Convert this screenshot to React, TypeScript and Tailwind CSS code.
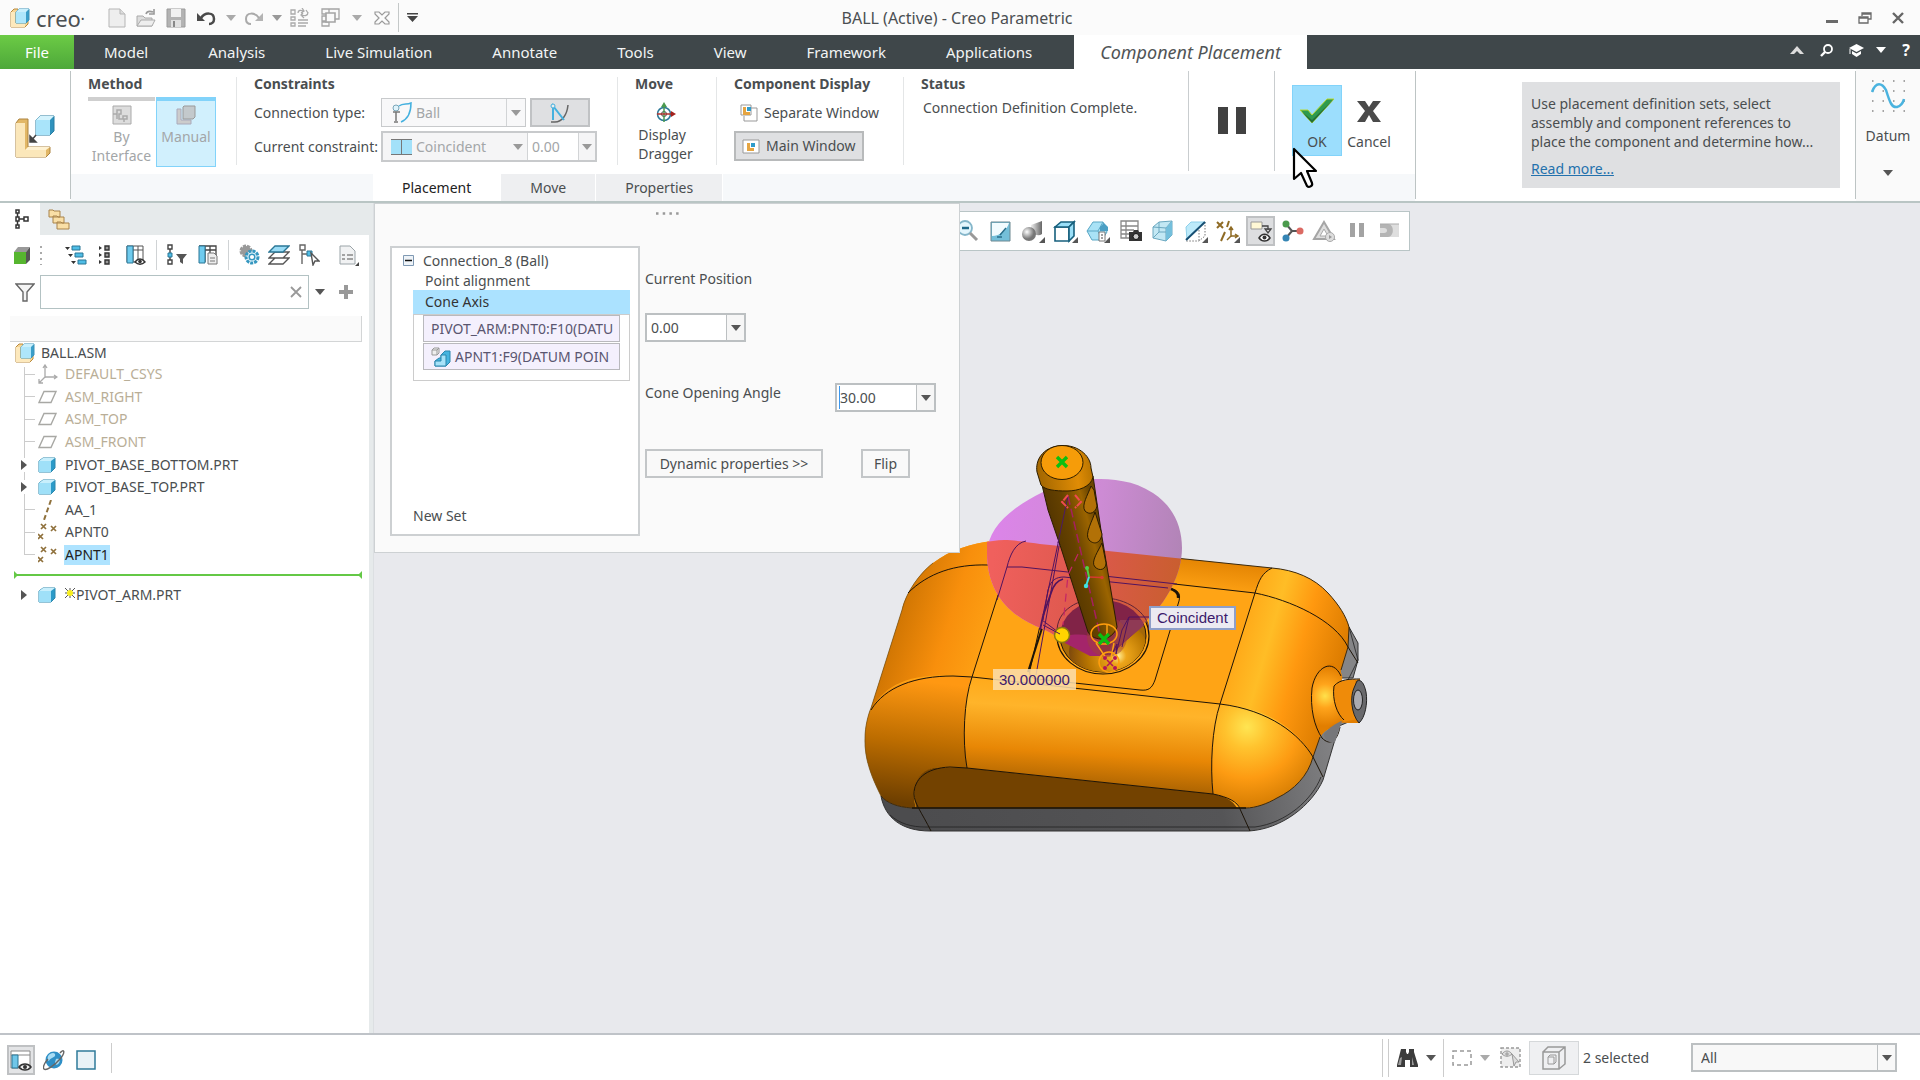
import { useState } from "react";
import type { ReactNode } from "react";

const Caret = ({ color = "#555" }: { color?: string }) => (
    <svg width="10" height="6" viewBox="0 0 10 6" className="shrink-0"><path d="M0 0H10L5 6Z" fill={color} /></svg>
);

const Corner = () => <path d="M25 19V25H19Z" fill="#555" />;

/* ---------- shared drawings ---------- */

const AssemblyIcon = () => (
    <svg width="20" height="20" viewBox="0 0 20 20" className="shrink-0">
        <path d="M1 4L4 1H8V13L16 12H18V16L15 19H1Z" fill="#f6d596" stroke="#b98a3c" />
        <path d="M1 4H5V15H15V19H1Z" fill="#fde9bd" />
        <path d="M6 4L9 1H19V12L16 15H6Z" fill="#3a9ec9" stroke="#3d93b8" />
        <path d="M6 4H16V15H6Z" fill="#aee6fb" />
        <path d="M6 4L9 1H19L16 4Z" fill="#c9effc" />
    </svg>
);

const PartIcon = () => (
    <svg width="18" height="16" viewBox="0 0 18 16" className="shrink-0">
        <path d="M1 4L5 1H17V11L13 15H1Z" fill="#2b9ac8" stroke="#2d88ad" />
        <path d="M1 4H13V15H1Z" fill="#9fe0f8" />
        <path d="M1 4L5 1H17L13 4Z" fill="#c8effc" />
    </svg>
);

const CsysIcon = () => (
    <svg width="20" height="20" viewBox="0 0 20 20" fill="none" stroke="#aaa" className="shrink-0">
        <path d="M7 13V2M5 4L7 1L9 4M7 13H18M16 11L19 13L16 15M7 13L1 19M1 15V19H5" strokeWidth="1.3" />
    </svg>
);

const PlaneIcon = () => (
    <svg width="20" height="14" viewBox="0 0 20 14" className="shrink-0">
        <path d="M6 1.500H18L13 12.500H1Z" fill="none" stroke="#a8a8a4" strokeWidth="1.400" />
    </svg>
);

const AxisIcon = () => (
    <svg width="20" height="20" viewBox="0 0 20 20" className="shrink-0">
        <path d="M13 0L6 20" stroke="#8f713c" strokeWidth="2" strokeDasharray="5 3" />
    </svg>
);

const PointsIcon = () => (
    <svg width="20" height="18" viewBox="0 0 20 18" stroke="#8f713c" strokeWidth="1.700" className="shrink-0">
        <path d="M3 1L8 6M8 1L3 6M13 3L18 8M18 3L13 8M0 11L5 16M5 11L0 16" />
    </svg>
);

const CreoMark = () => (
    <div className="flex items-center gap-1.5 text-[#4b4f52]">
        <AssemblyIcon />
        <span className="text-[22px] leading-6">creo<sup className="text-[9px]">•</sup></span>
    </div>
);

/* ---------- title bar ---------- */

const TitleBar = () => (
    <header className="flex h-[35px] items-center bg-[#fbfbfb] px-2.5">
        <div className="flex flex-1 items-center">
            <CreoMark />
            <div className="ml-6 flex items-center text-[#a6a6a6]">
                <button aria-label="New" className="mr-2.5">
                    <svg width="18" height="20" viewBox="0 0 18 20" fill="#eee" stroke="#b5b5b5"><path d="M1 1H12L17 6V19H1Z" /><path d="M12 1V6H17" fill="#ddd" /></svg>
                </button>
                <button aria-label="Open" className="mr-2.5">
                    <svg width="20" height="20" viewBox="0 0 20 20" fill="#ddd" stroke="#aaa"><path d="M1 18V8H7L9 10H16V18Z" /><path d="M1 18L5 12H19L16 18Z" fill="#eee" /><path d="M10 6C11 3 14 3 17 4M18 1V6H13" fill="none" strokeWidth="1.6" stroke="#999" /></svg>
                </button>
                <button aria-label="Save" className="mr-2.5">
                    <svg width="20" height="20" viewBox="0 0 20 20"><path d="M1 1H19V19H1Z" fill="#b3b3b3" stroke="#9b9b9b" /><path d="M5 1H15V9H5Z" fill="#f1f1f1" /><path d="M5 12H15V19H5Z" fill="#e0e0e0" /><path d="M7 13H9V19H7Z" fill="#888" /></svg>
                </button>
                <button aria-label="Undo" className="mr-2.5">
                    <svg width="20" height="16" viewBox="0 0 20 16"><path d="M1 3V11H9Z" fill="#4a4a4a" /><path d="M5 8C9 2 18 2 18 9C18 12 16 14 13 14" fill="none" stroke="#4a4a4a" strokeWidth="2.5" /></svg>
                </button>
                <Caret color="#aaa" />
                <button aria-label="Redo" className="mr-2 ml-2">
                    <svg width="20" height="16" viewBox="0 0 20 16"><path d="M19 3V11H11Z" fill="#b4b4b4" /><path d="M15 8C11 2 2 2 2 9C2 12 4 14 7 14" fill="none" stroke="#aaa" strokeWidth="2" /></svg>
                </button>
                <Caret color="#999" />
                <button aria-label="Regenerate" className="mr-3 ml-2">
                    <svg width="19" height="20" viewBox="0 0 19 20" fill="none" stroke="#aaa" strokeWidth="1.3"><path d="M1 2H5V6H1ZM1 9H5V12H1ZM1 15H5V18H1ZM8 12H18M8 15H18M8 18H16" /><path d="M8 5C8 2 11 2 13 3M12 0L14 3L11 5M18 4C18 8 15 8 12 7M13 5L11 7L14 10M18 5L16 2" /></svg>
                </button>
                <button aria-label="Windows" className="mr-3">
                    <svg width="19" height="20" viewBox="0 0 19 20" fill="#fafafa" stroke="#a5a5a5" strokeWidth="1.3"><path d="M1 1H8V6H1ZM1 8H8V13H1ZM1 14H8V18H1ZM8 1H18V11H8Z" /><path d="M5 5H14V14H5Z" strokeWidth="1.600" /></svg>
                </button>
                <Caret color="#aaa" />
                <button aria-label="Close window" className="mr-2 ml-3">
                    <svg width="16" height="14" viewBox="0 0 16 14" fill="none" stroke="#9a9a9a" strokeWidth="1.2"><path d="M1 1H5L8 4L11 1H15V3L11 7L15 11V13H11L8 10L5 13H1V11L5 7L1 3Z" /></svg>
                </button>
                <span className="h-[29px] w-px bg-[#c4c8c8]" />
                <button aria-label="Customize" className="ml-2">
                    <svg width="11" height="9" viewBox="0 0 11 9" fill="#444"><path d="M0 0H11V1.500H0ZM0 3H11L5.500 9Z" /></svg>
                </button>
            </div>
        </div>
        <h1 className="text-base text-[#4b4f52]">BALL (Active) - Creo Parametric</h1>
        <div className="flex flex-1 items-center justify-end gap-5 pr-1.5">
            <button aria-label="Minimize" className="pt-2">
                <svg width="12" height="4" viewBox="0 0 12 4"><path d="M0 0H12V3H0Z" fill="#6a6a6a" /></svg>
            </button>
            <button aria-label="Restore">
                <svg width="14" height="12" viewBox="0 0 14 12" fill="none" stroke="#6a6a6a" strokeWidth="1.300"><path d="M4 4V1H13V7H10M4 2H13" /><path d="M1 5H10V11H1ZM1 6H10" /></svg>
            </button>
            <button aria-label="Close">
                <svg width="12" height="12" viewBox="0 0 12 12"><path d="M1 1L11 11M11 1L1 11" stroke="#666" strokeWidth="2.400" /></svg>
            </button>
        </div>
    </header>
);

/* ---------- menu ---------- */

const menus = ["Model", "Analysis", "Live Simulation", "Annotate", "Tools", "View", "Framework", "Applications"];

const MenuBar = () => (
    <nav className="flex h-[34px] items-stretch bg-[#3f474a] text-[15px] text-white">
        <button className="w-[74px] bg-linear-to-b from-[#6ccb45] to-[#4da83a]">File</button>
        {menus.map((m) => (
            <button key={m} className="px-[30px] text-[#f2f4f4]">{m}</button>
        ))}
        <button className="ml-3 bg-white px-[26px] text-lg text-[#505456] italic">Component Placement</button>
        <div className="flex flex-1 items-center justify-end gap-4 pr-2.5 pb-1">
            <button aria-label="Collapse ribbon"><svg width="14" height="9" viewBox="0 0 14 9"><path d="M7 0L14 8H10L7 5L4 8H0Z" fill="#ddd" /></svg></button>
            <button aria-label="Search"><svg width="13" height="13" viewBox="0 0 13 13" fill="none" stroke="#fff"><circle cx="8" cy="5" r="4" strokeWidth="1.800" /><path d="M5 8L1 12" strokeWidth="2.400" /></svg></button>
            <button aria-label="Learning" className="flex items-center gap-3">
                <svg width="15" height="13" viewBox="0 0 15 13" fill="#fff"><path d="M7.500 0L15 4L7.500 8L0 4ZM3 7L7.500 9.500L12 7V10L7.500 13L3 10Z" /><path d="M1 5V10" stroke="#fff" /></svg>
                <Caret color="#fff" />
            </button>
            <button aria-label="Help" className="text-base font-bold">?</button>
        </div>
    </nav>
);

/* ---------- ribbon ---------- */

const Rule = ({ tall = false }: { tall?: boolean }) => (
    <span className={tall ? "mt-0.5 h-[100px] w-px shrink-0 bg-[#c9cdcf]" : "mt-2 h-[88px] w-px shrink-0 bg-[#e4e6e7]"} />
);

const Group = ({ title, children }: { title: string; children: ReactNode }) => (
    <section className="pt-[5px] pr-5 pl-[17px]">
        <h2 className="leading-5 font-bold text-[#4a4e50]">{title}</h2>
        {children}
    </section>
);

const MiniWindow = ({ separate = false }: { separate?: boolean }) => (
    <svg width="18" height="18" viewBox="0 0 18 18" fill="#fff" stroke="#999" className="shrink-0">
        {separate ? <path d="M7 4H17V17H4V12M1 1H11V11H1Z" /> : <path d="M1 3H17V16H1Z" />}
        <g transform={separate ? "translate(2 2)" : "translate(4 5)"} stroke="none">
            <path d="M1 1H4V6H8V9H1Z" fill="#e5a542" />
            <path d="M5 1H9V5H5Z" fill="#2f9ccb" />
        </g>
    </svg>
);

const Ribbon = () => {
    const [tab, setTab] = useState("Placement");

    return (
        <div className="flex h-[134px] border-b-2 border-[#b9c5c4] bg-white text-sm text-[#4a4e50]">
            <div className="flex w-[70px] shrink-0 items-center justify-center pt-1">
                <svg width="40" height="44" viewBox="0 0 40 44">
                    <path d="M1 8L4 4H13V32H35V38L31 42H1Z" fill="#e2b766" stroke="#ad8440" />
                    <path d="M1 8H10V35H31V42H1Z" fill="#fbe7ba" />
                    <path d="M10 35L13 32H35L31 35Z" fill="#fff2d2" />
                    <path d="M21 5L25 1H39V16L35 20H21Z" fill="#2f92bd" stroke="#2a7da1" />
                    <path d="M21 5H35V20H21Z" fill="#a9e4fa" />
                    <path d="M21 5L25 1H39L35 5Z" fill="#d4f3fd" />
                    <path d="M21 20L16 26M15 21V27H21Z" fill="#444" stroke="#444" strokeWidth="1.500" />
                </svg>
            </div>
            <div className="my-0.5 w-px bg-[#bdc4c4]" />

            <div className="flex shrink-0 flex-col">
                <div className="flex h-[105px]">
                    <Group title="Method">
                        <div className="mt-[3px] flex gap-px leading-[19px] text-[#a3a6a8]">
                            <button className="flex w-[67px] flex-col items-center border-t-4 border-[#cfcfcf] pt-1">
                                <svg width="20" height="20" viewBox="0 0 20 20" fill="none" stroke="#aaa"><path d="M1 1H19V19H1Z" fill="#ddd" /><path d="M1 9H5V5H9V9H7V14H11V11H15V14H12V17M5 9V14" strokeWidth="1.500" /></svg>
                                <span className="mt-0.5">By<br />Interface</span>
                            </button>
                            <button className="flex h-[70px] w-[60px] flex-col items-center border border-t-4 border-[#82d3fa] bg-[#d1f0fd] pt-1">
                                <svg width="20" height="20" viewBox="0 0 20 20" fill="#ccc" stroke="#aab"><path d="M1 4H5V15H15V19H1Z" /><path d="M7 2L8 1H19V12L17 14H7Z" fill="#c3c9cc" stroke="#999" /></svg>
                                <span className="mt-0.5">Manual</span>
                            </button>
                        </div>
                    </Group>
                    <Rule />
                    <Group title="Constraints">
                        <div className="mt-1 flex items-center">
                            <label htmlFor="ctype" className="w-[127px] whitespace-nowrap">Connection type:</label>
                            <div className="flex h-[29px] w-[145px] items-center border border-[#c8cacc] bg-[#f8f8f9] pl-2.5 text-[#a3a6a8]">
                                <svg width="20" height="22" viewBox="0 0 20 22" fill="none" className="shrink-0"><circle cx="4" cy="6" r="3" stroke="#7aa6b8" fill="#dff3fb" /><path d="M1 10H8M4 10V19M2 20H6" stroke="#777" strokeWidth="1.500" /><path d="M7 4C11 1 15 3 19 1C19 10 16 17 9 20" stroke="#45b1df" strokeWidth="1.500" /></svg>
                                <select id="ctype" className="h-full min-w-0 flex-1 appearance-none pl-1 text-[#a3a6a8]"><option>Ball</option></select>
                                <span className="flex h-full w-[19px] items-center justify-center border-l border-[#d2d4d6]"><Caret color="#999" /></span>
                            </div>
                            <button aria-label="Limits" className="ml-1 flex h-[29px] w-[60px] items-center justify-center border-2 border-[#c0c2c4] bg-[#dfe0e2]">
                                <svg width="20" height="22" viewBox="0 0 20 22" fill="none"><path d="M1 20H5C12 20 17 13 18 3" stroke="#666" strokeWidth="1.500" /><path d="M3 18V4L14 18" stroke="#45b1df" strokeWidth="2" /><circle cx="3" cy="4" r="2" stroke="#45b1df" fill="#eee" /></svg>
                            </button>
                        </div>
                        <div className="mt-1 flex items-center">
                            <label htmlFor="ccons" className="w-[127px] whitespace-nowrap">Current constraint:</label>
                            <div className="flex h-[31px] w-[216px] items-center border-2 border-[#c8cacc] bg-[#f5f5f6] pl-2 text-[#a3a6a8]">
                                <svg width="21" height="16" viewBox="0 0 21 16" className="shrink-0"><path d="M0 0H21V16H0Z" fill="#a3e1f9" /><path d="M0 0.500H21M0 15.500H21M10.500 0V16" stroke="#777" /></svg>
                                <select id="ccons" className="h-full min-w-0 flex-1 appearance-none pl-1 text-[#a3a6a8]"><option>Coincident</option></select>
                                <Caret color="#999" />
                                <input aria-label="Offset" defaultValue="0.00" className="ml-1 h-full w-[52px] border-x border-[#d2d4d6] bg-white px-1 text-[#a3a6a8]" />
                                <span className="flex w-4 items-center justify-center"><Caret color="#999" /></span>
                            </div>
                        </div>
                    </Group>
                    <Rule />
                    <Group title="Move">
                        <button className="mt-2 flex w-[61px] flex-col items-center text-left leading-[19px]">
                            <svg width="20" height="21" viewBox="0 0 20 21" fill="none"><circle cx="8" cy="12" r="6.500" stroke="#2a7796" strokeWidth="1.500" /><circle cx="8" cy="12" r="2.500" stroke="#444" /><path d="M8 5V20" stroke="#4b9a4f" strokeWidth="1.500" /><path d="M1 12H15" stroke="#b1322c" strokeWidth="1.500" /><path d="M8 0L11 5H5Z" fill="#4b9a4f" /><path d="M20 12L15 9V15Z" fill="#a3211c" /></svg>
                            <span className="mt-0.5">Display<br />Dragger</span>
                        </button>
                    </Group>
                    <Rule />
                    <Group title="Component Display">
                        <div className="mt-1 flex w-[149px] flex-col items-start gap-1">
                            <button className="flex h-[29px] items-center gap-1.5 pl-1.5 whitespace-nowrap"><MiniWindow separate />Separate Window</button>
                            <button className="flex h-[30px] items-center gap-1.5 border-2 border-[#b8babb] bg-[#dfe0e2] px-1.5 whitespace-nowrap"><MiniWindow />Main Window</button>
                        </div>
                    </Group>
                    <Rule />
                    <Group title="Status">
                        <p className="mt-1 w-[247px] pl-0.5 leading-5">Connection Definition Complete.</p>
                    </Group>
                    <Rule tall />
                    <div className="flex w-[85px] items-start justify-center pt-[38px]">
                        <button aria-label="Pause"><svg width="28" height="27" viewBox="0 0 28 27" fill="#414141"><path d="M0 0H10V27H0ZM18 0H28V27H18Z" /></svg></button>
                    </div>
                    <Rule tall />
                    <div className="flex w-[140px] items-start pt-4 pl-[17px]">
                        <button className="flex h-[71px] w-[50px] flex-col items-center border border-[#82d3fa] bg-[#9cdefd] pt-3">
                            <svg width="36" height="26" viewBox="0 0 36 26"><path d="M1 12H9L13 17L28 1H35L13 25Z" fill="#2e9a4f" stroke="#b8d832" /><path d="M35 1L13 25L3 14L13 22Z" fill="#226f39" /></svg>
                            <span className="mt-2 leading-5">OK</span>
                        </button>
                        <button className="flex w-[54px] flex-col items-center pt-4">
                            <svg width="24" height="21" viewBox="0 0 24 21" fill="#4a4a4a"><path d="M0 0H8L12 6L16 0H24L16 10L24 21H16L12 14L8 21H0L8 10Z" /></svg>
                            <span className="mt-2.5 leading-5">Cancel</span>
                        </button>
                    </div>
                </div>
                <div className="flex h-[27px] bg-[#f6f8fa] pl-[302px]">
                    {["Placement", "Move", "Properties"].map((t) => (
                        <button
                            key={t}
                            onClick={() => setTab(t)}
                            className={`border-r border-white px-[29px] ${tab === t ? "bg-white text-[#222]" : "bg-[#eeeff1]"}`}
                        >
                            {t}
                        </button>
                    ))}
                </div>
            </div>
            <div className="my-0.5 w-px bg-[#bdc4c4]" />

            <div className="flex flex-1 justify-end pr-[15px]">
                <aside className="mt-[13px] h-[106px] w-[318px] bg-[#dfe0e2] pt-3 pl-[9px] leading-[19px] whitespace-nowrap">
                    <p>Use placement definition sets, select<br />assembly and component references to<br />place the component and determine how...</p>
                    <a href="#more" className="mt-2 inline-block text-[#2371ad] underline">Read more...</a>
                </aside>
            </div>

            <div className="my-0.5 w-px bg-[#bdc4c4]" />
            <button className="flex w-16 shrink-0 flex-col items-center bg-[#fafafa] pt-2">
                <svg width="36" height="36" viewBox="0 0 36 36" fill="none">
                    <path d="M2 4H36M2 14H36M2 24H36M2 34H36" stroke="#888" strokeWidth="1.500" strokeDasharray="1.500 9" />
                    <path d="M2 15C6 4 12 6 16 13C20 26 22 31 27 30C31 29 33 26 34 22" stroke="#4ab3df" strokeWidth="2.500" />
                </svg>
                <span className="mt-[13px] mb-6 leading-5">Datum</span>
                <Caret />
            </button>
        </div>
    );
};

/* ---------- model tree ---------- */

type Node = { name: string; icon: ReactNode; dim?: boolean; open?: boolean; selected?: boolean };

const nodes: Node[] = [
    { name: "DEFAULT_CSYS", icon: <CsysIcon />, dim: true },
    { name: "ASM_RIGHT", icon: <PlaneIcon />, dim: true },
    { name: "ASM_TOP", icon: <PlaneIcon />, dim: true },
    { name: "ASM_FRONT", icon: <PlaneIcon />, dim: true },
    { name: "PIVOT_BASE_BOTTOM.PRT", icon: <PartIcon />, open: true },
    { name: "PIVOT_BASE_TOP.PRT", icon: <PartIcon />, open: true },
    { name: "AA_1", icon: <AxisIcon /> },
    { name: "APNT0", icon: <PointsIcon /> },
    { name: "APNT1", icon: <PointsIcon />, selected: true },
];

const Twisty = () => <svg width="6" height="10" viewBox="0 0 6 10"><path d="M0 0L6 5L0 10Z" fill="#555" /></svg>;

const Tool = ({ label, children }: { label: string; children: ReactNode }) => (
    <button aria-label={label} className="flex w-[26px] shrink-0 justify-center">
        <svg width="22" height="22" viewBox="0 0 22 22" fill="none">{children}</svg>
    </button>
);

const ToolRule = () => <span className="mx-[7px] h-[30px] w-px bg-[#d0d3d5]" />;

const ModelTree = () => (
    <aside className="flex w-[374px] shrink-0 border-r border-[#dcdfe2] bg-[#e6eaeb]">
        <div className="flex flex-1 flex-col">
            <div className="flex h-8">
                <button aria-label="Model tree" className="flex w-10 items-center justify-center bg-white pl-1">
                    <svg width="14" height="20" viewBox="0 0 14 20" fill="none" stroke="#333" strokeWidth="1.500"><path d="M1 1H4V4H1ZM1 8H4V12H1ZM1 16H4V19H1ZM9 8H13V12H9ZM2.500 4V8M2.500 12V16M4 10H9" /></svg>
                </button>
                <button aria-label="Folders" className="ml-2 flex items-center">
                    <svg width="22" height="22" viewBox="0 0 22 22" fill="#f9dfa6" stroke="#a8834a"><path d="M1 2H5L6 3H12V9H1ZM5 8H9L10 9H16V15H5ZM9 14H13L14 15H21V21H9Z" /></svg>
                </button>
            </div>
            <div className="flex-1 bg-white">
                <div className="flex items-center pt-[5px] pl-[9px]">
                    <Tool label="Model display"><path d="M3 8H15V20H3Z" fill="#56b52f" /><path d="M3 8L7 3H19L15 8Z" fill="#999" /><path d="M15 8L19 3V16L15 20Z" fill="#555" /></Tool>
                    <svg width="4" height="20" viewBox="0 0 4 20" className="mr-5 ml-1 shrink-0"><path d="M2 1V20" stroke="#aaa" strokeWidth="2" strokeDasharray="2 4" /></svg>
                    <div className="flex gap-0.5">
                        <Tool label="Expand levels"><g fill="#4fbde6" stroke="#2a7796"><path d="M7 2H15V6H7ZM10 9H18V13H10ZM13 16H21V20H13Z" /></g><path d="M0 3H5L2.500 6ZM3 10H8L5.500 13ZM6 17H11L8.500 20Z" fill="#333" /></Tool>
                        <Tool label="Collapse"><g fill="#999" stroke="#333" strokeWidth="1.400"><path d="M12 2H16V6H12ZM12 9H16V13H12ZM12 16H16V20H12Z" /></g><path d="M6 2L9 4L6 6ZM6 9L9 11L6 13ZM6 16L9 18L6 20Z" fill="#333" /></Tool>
                    </div>
                    <div className="w-1.5" />
                    <Tool label="Columns"><path d="M2 2H18V18H2ZM2 6H18M8 2V18M13 2V18" stroke="#555" /><path d="M2 2H8V19H2Z" fill="#6fcbee" stroke="#2a7796" /><path d="M10 18C13 14 17 14 20 18C17 21 13 21 10 18Z" fill="#fff" stroke="#333" strokeWidth="1.400" /><circle cx="15" cy="17.500" r="1.800" fill="#333" /></Tool>
                    <ToolRule />
                    <div className="flex gap-[5px]">
                        <Tool label="Tree filter"><path d="M2 1H6V5H2ZM2 16H6V20H2ZM4 5V9M4 13V16" stroke="#444" strokeWidth="1.400" /><path d="M2 9H6V13H2Z" fill="#4fbde6" stroke="#2a7796" /><path d="M10 10H21L17 15V20L14 18V15Z" fill="#555" /></Tool>
                        <Tool label="Column settings"><path d="M2 2H19V14M2 6H19M8 2V18M13 2V10" stroke="#444" strokeWidth="1.300" /><path d="M2 2H8V19H2Z" fill="#6fcbee" stroke="#2a7796" /><path d="M11 9H17L20 12V20H11Z" fill="#eee" stroke="#777" /><path d="M13 14H18M13 17H18" stroke="#777" /></Tool>
                    </div>
                    <ToolRule />
                    <div className="flex gap-1">
                        <Tool label="Settings"><circle cx="8" cy="7" r="5" fill="#999" stroke="#999" strokeWidth="3" strokeDasharray="3 1" /><circle cx="14" cy="13" r="6" fill="#eaf8fe" stroke="#3597c0" strokeWidth="3" strokeDasharray="3 1" /><circle cx="14" cy="13" r="2.800" fill="#fff" stroke="#3597c0" strokeWidth="1.500" /></Tool>
                        <Tool label="Layers"><g fill="#fff" stroke="#555" strokeWidth="1.300"><path d="M7 14H21L15 20H1ZM7 8H21L15 14H1Z" /><path d="M7 2H21L15 8H1Z" fill="#9adcf6" stroke="#2a7796" /></g></Tool>
                        <Tool label="Select in tree"><path d="M2 1H7V6H2ZM4 6V20M4 10H10" stroke="#666" strokeWidth="1.400" /><path d="M9 7H14V12H9Z" fill="#4fbde6" stroke="#2a7796" /><path d="M13 9L21 17L17 17L15 21Z" fill="#fff" stroke="#555" strokeWidth="1.400" /></Tool>
                    </div>
                    <div className="w-[13px]" />
                    <Tool label="Report"><path d="M3 2H13L18 7V20H3Z" fill="#f1f2f3" stroke="#9ba4a8" /><path d="M5 11H8M5 15H8M10 11H16M10 15H16" stroke="#888" strokeWidth="1.500" /><path d="M22 18V22H18Z" fill="#444" /></Tool>
                </div>

                <div className="mt-[5px] flex items-center pl-[15px]">
                    <svg width="20" height="19" viewBox="0 0 20 19" className="mr-[5px] shrink-0"><path d="M1 1H19L12 9V18H8V9Z" fill="#f4f4f4" stroke="#666" strokeWidth="1.400" /></svg>
                    <div className="flex h-[34px] w-[269px] items-center border border-[#b3c2c3] pr-1.5">
                        <input aria-label="Filter tree" className="h-full min-w-0 flex-1 px-2 text-sm outline-none" />
                        <button aria-label="Clear"><svg width="12" height="12" viewBox="0 0 12 12"><path d="M1 1L11 11M11 1L1 11" stroke="#999" strokeWidth="1.800" /></svg></button>
                    </div>
                    <button aria-label="Filter options" className="mx-1.5"><Caret /></button>
                    <button aria-label="Add filter" className="ml-2"><svg width="14" height="14" viewBox="0 0 14 14"><path d="M7 0V14M0 7H14" stroke="#999" strokeWidth="4" /></svg></button>
                </div>

                <div className="mt-[7px] mr-[7px] ml-2.5 h-[26px] border-r border-b border-[#d3d5d6] bg-[#fafafa]" />

                <div className="pt-px text-sm text-[#4a4e50]">
                    <div className="flex h-5 items-center gap-1.5 pl-[15px]"><AssemblyIcon />BALL.ASM</div>
                    <ul className="relative flex h-[203px] flex-col">
                        <li aria-hidden className="absolute top-1 left-6 h-[188px] w-px bg-[#ccc]" />
                        {nodes.map((n) => (
                            <li key={n.name} className="relative flex flex-1 items-center pl-[21px]">
                                {n.open ? <span className="w-[17px]"><span className="flex h-3.5 w-2 items-center bg-white"><Twisty /></span></span> : <span className="mr-[3px] ml-[3px] h-px w-[11px] bg-[#ccc]" />}
                                <span className="flex w-[27px] justify-start">{n.icon}</span>
                                <span className={n.selected ? "-ml-px bg-[#aee3ff] px-px text-[#222]" : n.dim ? "text-[#b9ae97]" : ""}>{n.name}</span>
                            </li>
                        ))}
                    </ul>
                    <svg className="mt-[5px] block h-2 w-full" preserveAspectRatio="none" viewBox="0 0 369 8">
                        <path d="M14 4H362" stroke="#64c846" strokeWidth="2" />
                        <path d="M14 0L18 4L14 8ZM362 0L358 4L362 8Z" fill="#64c846" />
                    </svg>
                    <div className="mt-[5px] flex h-[22px] items-center pl-[21px]">
                        <span className="w-[17px]"><Twisty /></span>
                        <span className="w-[27px]"><PartIcon /></span>
                        <svg width="10" height="10" viewBox="0 0 10 10" className="mr-px mb-1"><path d="M0 0L10 10M10 0L0 10M5 0V10M0 5H10" stroke="#555" /><circle cx="5" cy="5" r="3" fill="#f8ee1c" /></svg>
                        PIVOT_ARM.PRT
                    </div>
                </div>
            </div>
        </div>
        <div className="w-1" />
    </aside>
);

/* ---------- placement dialog ---------- */

const NumberBox = ({ id, value, caret = false }: { id: string; value: string; caret?: boolean }) => (
    <div className="flex h-[29px] w-[101px] items-center border-2 border-[#bcc0c2] bg-white">
        {caret && <span className="ml-0.5 h-[23px] w-px shrink-0 bg-[#3b97ee]" />}
        <input id={id} defaultValue={value} className={`h-full min-w-0 flex-1 outline-none ${caret ? "" : "pl-1"}`} />
        <span className="flex h-full w-[18px] items-center justify-center border-l border-[#bcc0c2] bg-[#f6f6f6]"><Caret /></span>
    </div>
);

const PlacementPanel = () => (
    <div className="relative z-10 h-[350px] w-[586px] shrink-0 border border-[#cdd1d3] bg-[#fafafa] text-sm text-[#4a4e50]">
        <div className="flex h-[42px] justify-center pt-2">
            <svg width="23" height="3" viewBox="0 0 23 3"><path d="M0 1.500H23" stroke="#999" strokeWidth="2.500" strokeDasharray="2.500 4.200" /></svg>
        </div>
        <div className="flex pl-[15px]">
            <div className="flex h-[290px] w-[250px] flex-col border-2 border-[#cdd0d2] bg-white pt-0.5">
                <div className="flex h-[21px] items-center gap-[9px] pl-[11px]">
                    <svg width="11" height="11" viewBox="0 0 11 11"><path d="M0.500 0.500H10.500V10.500H0.500Z" fill="#eef3f8" stroke="#7f99b3" /><path d="M2 5.500H9" stroke="#111" strokeWidth="1.500" /></svg>
                    Connection_8 (Ball)
                </div>
                <div className="h-[19px] pl-[33px] leading-5">Point alignment</div>
                <div className="mr-2 ml-[21px] h-6 bg-[#abe2ff] pl-3 leading-6 text-[#333]">Cone Axis</div>
                <div className="mr-2 ml-[21px] h-[67px] border border-[#ccc] px-[9px]">
                    <button className="flex h-[27px] w-full items-center overflow-hidden border border-[#b9b9bd] bg-[#f4f0fd] pl-[7px] whitespace-nowrap text-[#5a5670]">PIVOT_ARM:PNT0:F10(DATU</button>
                    <button className="mt-px flex h-[27px] w-full items-center gap-1 overflow-hidden border border-[#b9b9bd] bg-[#f4f0fd] pl-[7px] whitespace-nowrap text-[#5a5670]">
                        <svg width="20" height="20" viewBox="0 0 20 20" className="shrink-0"><path d="M1 3L3 1H8V6L6 8H1ZM1 3H6V8M6 3L8 1" fill="#eee" stroke="#999" /><path d="M4 19V14L8 11H10V8L14 4H19V15L15 19Z" fill="#46b4df" stroke="#2a86ad" /><path d="M4 14H10V8H15V19H4Z" fill="#a7e2f8" stroke="#2a86ad" /></svg>
                        APNT1:F9(DATUM POIN
                    </button>
                </div>
                <button className="mt-auto mb-2 ml-[21px] text-left leading-5">New Set</button>
            </div>
            <div className="flex flex-1 flex-col pr-[23px] pl-[5px]">
                <label htmlFor="pos" className="mt-[23px] leading-5">Current Position</label>
                <div className="mt-6"><NumberBox id="pos" value="0.00" /></div>
                <div className="mt-[41px] flex items-start justify-between">
                    <label htmlFor="angle" className="leading-5">Cone Opening Angle</label>
                    <NumberBox id="angle" value="30.00" caret />
                </div>
                <div className="mt-[37px] flex gap-[38px]">
                    <button className="h-[29px] w-[178px] border-2 border-[#c3c6c8] bg-[#f9f9f9] leading-5">Dynamic properties &gt;&gt;</button>
                    <button className="h-[29px] w-[49px] border-2 border-[#c3c6c8] bg-[#f9f9f9] leading-5">Flip</button>
                </div>
            </div>
        </div>
    </div>
);

/* ---------- graphics toolbar ---------- */

const GTool = ({ label, on = false, children }: { label: string; on?: boolean; children: ReactNode }) => (
    <button aria-label={label} className={`flex h-[30px] w-[29px] shrink-0 items-center justify-center ${on ? "border-2 border-[#bfc1c3] bg-[#dddee0]" : ""}`}>
        <svg width="26" height="26" viewBox="0 0 26 26" fill="none" className="shrink-0">{children}</svg>
    </button>
);

const GraphicsToolbar = () => (
    <div className="mt-2 flex h-10 w-[450px] items-center justify-between overflow-hidden border border-l-0 border-[#b9c5c6] bg-white pr-1">
        <button aria-label="Zoom out" className="w-[23px] shrink-0">
            <svg width="20" height="26" viewBox="0 0 20 26" fill="none"><circle cx="5" cy="10" r="7" fill="#e4f6fd" stroke="#85b6ca" strokeWidth="1.800" /><path d="M2 10H9" stroke="#20698a" strokeWidth="2.500" /><path d="M10 15L17 22" stroke="#999" strokeWidth="3" /></svg>
        </button>
        <GTool label="Repaint"><path d="M3 4H22V23H3Z" fill="#74bfd9" stroke="#6d8790" /><path d="M4 5H21C19 12 12 18 4 18Z" fill="#f2fbfe" /><path d="M18 10L12 17M9 19H14" stroke="#276d8a" strokeWidth="1.500" /></GTool>
        <GTool label="Shading"><defs><radialGradient id="ball" cx="0.35" cy="0.35"><stop offset="0" stopColor="#fff" /><stop offset="1" stopColor="#777" /></radialGradient><linearGradient id="cyl"><stop offset="0" stopColor="#eee" /><stop offset="1" stopColor="#666" /></linearGradient></defs><path d="M11 7L22 3V16C18 19 14 16 11 13Z" fill="url(#cyl)" /><circle cx="9" cy="16" r="7" fill="url(#ball)" /><Corner /></GTool>
        <GTool label="Display style"><g stroke="#17607d" strokeWidth="1.600"><path d="M2 9H16V23H2Z" fill="#fff" /><path d="M2 9L8 4H21L16 9Z" fill="#9adff8" /><path d="M16 9L21 4V18L16 23Z" fill="#9adff8" /></g><Corner /></GTool>
        <GTool label="Saved orientations"><path d="M8 4H18L22 14L17 22H7L2 13Z" fill="#a9e2f6" stroke="#5aa7c5" /><path d="M2 13H13L18 4M13 13L17 22" stroke="#5aa7c5" /><path d="M15 9L19 5L23 9V13H15Z" fill="#4b9fc4" /><path d="M14 14H20V23H14Z" fill="#fff" stroke="#777" /><path d="M16 17H18M16 20H18" stroke="#444" /><Corner /></GTool>
        <GTool label="View manager"><path d="M3 3H20V20H3ZM3 8H20M3 12H16M3 16H16M8 3V20" stroke="#888" strokeWidth="1.300" /><path d="M11 14H15L16 12H20L21 14H24V23H11Z" fill="#333" /><circle cx="18" cy="18.500" r="3" fill="#ccc" stroke="#111" /></GTool>
        <GTool label="Perspective"><path d="M3 9L9 4L22 3V17L16 23L3 20Z" fill="#c3e8f4" stroke="#6aa7bf" /><path d="M3 9L16 10L22 3M16 10V23M9 4V14L3 20M9 14H22" stroke="#6aa7bf" /><path d="M16 10L22 3V17L16 23Z" fill="#74bfdc" /></GTool>
        <GTool label="Sections"><path d="M3 9L8 4H22L4 22Z" fill="#bdeafa" stroke="#8ed0ea" /><path d="M22 4V18L16 23H3M16 12V23" stroke="#777" strokeDasharray="1.500 1.500" /><path d="M3 22L22 4" stroke="#174f73" strokeWidth="2" /><Corner /></GTool>
        <GTool label="Datum display"><path d="M2 4L8 10M8 4L2 10M14 3L12 9M10 14L6 23" stroke="#8f6b25" strokeWidth="2" /><path d="M16 10V18M14 12L16 9L18 12M16 18H22M20 16L23 18L20 20M16 18L12 22" stroke="#8f6b25" strokeWidth="1.500" /><Corner /></GTool>
        <GTool label="Annotations" on><path d="M3 4H14V11H3Z" fill="#fff8d5" stroke="#999" /><path d="M14 8H20V12M17 11H23L20 15Z" stroke="#444" strokeWidth="1.300" /><path d="M11 20C14 15 19 15 22 20C19 24 14 24 11 20Z" fill="#fff" stroke="#333" strokeWidth="1.500" /><circle cx="16.500" cy="19.500" r="2" fill="#333" /></GTool>
        <GTool label="Spin center"><path d="M6 6L12 13M12 13H20M12 13L6 20" stroke="#555" strokeWidth="2" /><circle cx="6" cy="6" r="3.500" fill="#4c9b4d" /><circle cx="20" cy="13" r="3.500" fill="#db6a63" /><circle cx="6" cy="20" r="3.500" fill="#3585b4" /></GTool>
        <GTool label="Simulate"><path d="M12 4L22 21H2Z" fill="#ddd" stroke="#a5a5a5" strokeWidth="2" /><path d="M12 11L16 18H8Z" fill="#fff" stroke="#aaa" /><circle cx="18" cy="19" r="4.500" fill="#ddd" stroke="#aaa" /><path d="M17 17L20 19L17 21Z" fill="#999" /></GTool>
        <GTool label="Pause simulation"><path d="M5 5H10V19H5ZM14 5H19V19H14Z" fill="#a3a3a3" /></GTool>
        <GTool label="Results"><path d="M3 6H22V19H3Z" fill="#dedede" /><path d="M3 6H11C17 6 18 18 11 19H3V15H7C11 15 11 10 7 10H3Z" fill="#b4b4b4" /><path d="M3 6H22" stroke="#aaa" /></GTool>
    </div>
);

/* ---------- 3D model ---------- */

const ModelView = () => (
    <div className="absolute top-[227px] left-[476px] h-[420px] w-[540px]">
        <svg width="540" height="420" viewBox="0 0 540 420" fill="none">
            <defs>
                <linearGradient id="front" x1="260" y1="250" x2="252" y2="375" gradientUnits="userSpaceOnUse">
                    <stop offset="0" stopColor="#ffa717" /><stop offset="0.25" stopColor="#ffb42a" /><stop offset="0.6" stopColor="#e88705" /><stop offset="1" stopColor="#8c5100" />
                </linearGradient>
                <linearGradient id="left" x1="30" y1="200" x2="140" y2="235" gradientUnits="userSpaceOnUse">
                    <stop offset="0" stopColor="#c66f00" /><stop offset="0.55" stopColor="#f88f0c" /><stop offset="1" stopColor="#ffa415" />
                </linearGradient>
                <linearGradient id="leftLow" x1="62" y1="250" x2="48" y2="372" gradientUnits="userSpaceOnUse">
                    <stop offset="0" stopColor="#ff9812" /><stop offset="0.5" stopColor="#bd6d00" /><stop offset="1" stopColor="#6e3f00" />
                </linearGradient>
                <linearGradient id="right" x1="385" y1="210" x2="490" y2="240" gradientUnits="userSpaceOnUse">
                    <stop offset="0" stopColor="#ffa717" /><stop offset="0.3" stopColor="#ffbd26" /><stop offset="0.6" stopColor="#ff980f" /><stop offset="1" stopColor="#dc7c00" />
                </linearGradient>
                <linearGradient id="back" x1="290" y1="118" x2="286" y2="155" gradientUnits="userSpaceOnUse">
                    <stop offset="0" stopColor="#e08000" /><stop offset="1" stopColor="#ffa315" />
                </linearGradient>
                <radialGradient id="shine" cx="397" cy="297" r="85" gradientUnits="userSpaceOnUse">
                    <stop offset="0" stopColor="#ffe552" /><stop offset="0.25" stopColor="#ffc32e" /><stop offset="0.6" stopColor="#fd9b12" /><stop offset="1" stopColor="#cf7800" />
                </radialGradient>
                <radialGradient id="boss" cx="475" cy="266" r="30" gradientUnits="userSpaceOnUse">
                    <stop offset="0" stopColor="#ffe14b" /><stop offset="0.4" stopColor="#ffa41b" /><stop offset="1" stopColor="#e27e00" />
                </radialGradient>
                <linearGradient id="cone" x1="140" y1="80" x2="335" y2="110" gradientUnits="userSpaceOnUse">
                    <stop offset="0" stopColor="#dd84ea" /><stop offset="0.55" stopColor="#cd8bd4" /><stop offset="1" stopColor="#b184b6" />
                </linearGradient>
                <linearGradient id="coneRed" x1="140" y1="150" x2="335" y2="175" gradientUnits="userSpaceOnUse">
                    <stop offset="0" stopColor="#f0605d" /><stop offset="0.5" stopColor="#dc584c" /><stop offset="1" stopColor="#c75f2c" />
                </linearGradient>
                <linearGradient id="rod" x1="208" y1="120" x2="252" y2="108" gradientUnits="userSpaceOnUse">
                    <stop offset="0" stopColor="#553600" /><stop offset="0.4" stopColor="#664200" /><stop offset="0.8" stopColor="#9b6400" /><stop offset="1" stopColor="#6b4500" />
                </linearGradient>
                <linearGradient id="collar" x1="190" y1="50" x2="243" y2="42" gradientUnits="userSpaceOnUse">
                    <stop offset="0" stopColor="#a56800" /><stop offset="0.7" stopColor="#e08c05" /><stop offset="1" stopColor="#b87400" />
                </linearGradient>
                <linearGradient id="metal" x1="60" y1="385" x2="490" y2="300" gradientUnits="userSpaceOnUse">
                    <stop offset="0" stopColor="#4c4c4e" /><stop offset="0.7" stopColor="#555557" /><stop offset="1" stopColor="#858587" />
                </linearGradient>
                <radialGradient id="bowl" cx="268" cy="226" r="55" gradientUnits="userSpaceOnUse">
                    <stop offset="0" stopColor="#fff09a" /><stop offset="0.15" stopColor="#eda51a" /><stop offset="0.55" stopColor="#b87500" /><stop offset="1" stopColor="#6c3c10" />
                </radialGradient>
                <clipPath id="body"><path d="M143 111C158 108 172 112 200 115L422 138C445 140 464 148 478 163C489 175 496 186 499 197L498 217L491 240V250L489 295C478 298 473 302 470 307L463 327C458 346 444 360 427 368C417 374 405 378 396 378H62C47 377 37 373 31 366C23 350 14 330 15 308C15 297 18 285 21 278L52 180C56 162 70 143 83 133C100 120 122 113 143 111Z" /></clipPath>
                <clipPath id="hole"><ellipse cx="253" cy="206" rx="43" ry="36" /></clipPath>
            </defs>

            {/* metal bottom half */}
            <path d="M31 366C35 388 52 401 80 401H399C432 399 462 375 473 350L489 296L503 290L490 248L503 248L508 230V213L499 197L450 300L396 370H62Z" fill="url(#metal)" stroke="#333" />
            <path d="M40 385C50 394 62 397 75 397H405C436 393 462 370 471 347M499 197L508 230L498 250" stroke="#222" strokeWidth="0.800" />

            {/* orange top half, one fill for each face */}
            <g clipPath="url(#body)">
                <path d="M0 90H540V400H0Z" fill="#ffa415" />
                <path d="M0 90H176C165 113 160 125 157 137L122 247C60 240 35 255 21 280L0 290Z" fill="url(#left)" />
                <path d="M0 295L21 280C35 255 60 243 122 247C114 270 112 310 117 338L83 338C65 345 60 365 68 385H0Z" fill="url(#leftLow)" />
                <path d="M176 111L165 115L157 137L172 137L405 163C410 148 414 141 422 138Z" fill="url(#back)" />
                <path d="M122 247L370 274C362 300 361 335 363 364L117 338C112 310 114 270 122 247Z" fill="url(#front)" />
                <path d="M405 163C410 148 414 141 422 138L510 130V340L463 327C445 295 410 276 370 274Z" fill="url(#right)" />
                <path d="M370 274C410 276 445 295 463 327L470 350L396 385L386 372L363 364C360 335 362 300 370 274Z" fill="url(#shine)" />
                <path d="M68 385C60 358 66 343 83 338H117L363 364C378 367 386 372 390 385Z" fill="#734200" />
            </g>
            <path d="M143 111C158 108 172 112 200 115L422 138C445 140 464 148 478 163C489 175 496 186 499 197L498 217L491 240M470 307L463 327C458 346 444 360 427 368C417 374 405 378 396 378H62C47 377 37 373 31 366" stroke="#3a2a12" />
            <path d="M31 366C23 350 14 330 15 308C15 297 18 285 21 278L52 180C56 162 70 143 83 133" stroke="#6a4a18" strokeWidth="0.700" />

            {/* edges */}
            <g stroke="#1d1408">
                <path d="M58 163C78 143 105 134 138 135L172 137L405 163C440 170 485 190 498 217L508 233" />
                <path d="M21 280C35 257 65 246 103 246L122 247L370 274C420 280 450 305 463 327L473 347" />
                <path d="M176 111C165 113 160 125 157 137L122 247C114 270 112 310 117 338" />
                <path d="M422 138C412 143 409 150 405 163L370 274C362 298 360 335 363 364" />
                <path d="M81 401C72 383 64 373 64 364C64 350 75 338 100 337L117 338L363 364C378 367 388 372 390 379L400 401" />
                <path d="M62 378H396" strokeWidth="1.500" />
            </g>

            {/* side boss */}
            <path d="M461 268C462 247 472 234 484 233C492 240 494 249 491 251L510 249V293H497C484 291 476 298 471 306C463 294 461 282 461 268Z" fill="url(#boss)" />
            <path d="M491 246C483 228 466 236 462 258C460 278 464 296 472 308C480 316 487 312 490 297" stroke="#1d1408" />
            <path d="M474 304C480 297 486 293 492 291L485 312C478 314 474 308 474 304Z" fill="#77777a" />
            <path d="M484 256C482 270 487 284 494 292L507 289L505 249L491 251Z" fill="#ef8b09" />
            <path d="M484 256C482 270 487 284 494 290M484 256C490 249 500 249 510 249" stroke="#1d1408" />
            <path d="M504 258C500 266 501 284 509 293C515 288 518 273 516 262C514 253 511 249 507 251Z" fill="#69696c" stroke="#222" />
            <ellipse cx="508" cy="270" rx="4.500" ry="10" fill="#aaaab0" stroke="#222" />

            {/* pocket on the top face */}
            <g stroke="#1d1408">
                <path d="M180 240L198 160C201 150 206 147 214 147L318 158C328 160 331 163 329 171L305 250C302 258 299 261 290 260L187 249C181 248 179 246 180 240Z" />
                <path d="M260 151L318 158C326 160 329 163 328 168" strokeWidth="2.400" />
                <path d="M178 242L193 195" strokeWidth="2" />
            </g>

            {/* ball socket */}
            <ellipse cx="253" cy="206" rx="46" ry="38" fill="#ffa415" stroke="#1d1408" strokeWidth="1.200" />
            <ellipse cx="253" cy="206" rx="43" ry="36" fill="#a46808" stroke="#1d1408" />
            <g clipPath="url(#hole)">
                <ellipse cx="259" cy="222" rx="40" ry="32" fill="url(#bowl)" />
            </g>

            {/* cone of motion */}
            <path d="M193 62C160 78 138 98 137 123C137 163 160 187 193 199C213 209 229 221 245 226H260C275 212 288 199 297 190C315 174 332 145 332 118C332 96 323 76 303 63C283 50 263 49 243 49Z" fill="url(#cone)" />
            <g clipPath="url(#body)">
                <path d="M137 108V123C137 163 160 187 193 199C213 209 229 221 245 226H260C275 212 288 199 297 190C315 174 332 145 332 118V108Z" fill="url(#coneRed)" />
            </g>
            <g clipPath="url(#hole)">
                <path d="M200 165H310V178L293 195C285 203 270 216 260 225H245L209 207Z" fill="#812347" />
                <path d="M200 203L215 206C230 203 240 205 250 210V226H240L209 210Z" fill="#a4256a" />
                <path d="M270 190H300L290 199L258 225Z" fill="#8f3a55" />
                <circle cx="257" cy="207" r="20" fill="#a24335" opacity="0.5" />
            </g>
            <path d="M207 203C206 180 228 168 253 168C276 168 298 182 299 200" stroke="#5d2338" />

            <g stroke="#51135f">
                <path d="M157 137L172 137L327 154M176 111C165 113 160 125 157 137L147 170M193 190L198 160C201 150 206 147 214 147L318 158" />
                <path d="M193 185L218 66L186 245M192 190L212 205M272 217L279 187H300" />
                <path d="M213 149C206 151 203 156 201 163L193 186L190 200" strokeWidth="1.800" />
            </g>

            {/* rod */}
            <path d="M192 55L198 80L210 115L238 202C244 212 262 212 267 197L252 107L243 46Z" fill="url(#rod)" stroke="#2b1c00" />
            <path d="M187 42C185 30 193 18 208 16C226 13 241 25 241 38L243 47C241 57 228 61 217 61C205 61 195 60 191 55Z" fill="url(#collar)" stroke="#2b1c00" />
            <ellipse cx="212" cy="32.500" rx="21" ry="17" fill="#f69c09" stroke="#2b1c00" />
            <g fill="#b27107" stroke="#2b1c00">
                <path d="M241 56C238 65 231 75 235 81C240 86 246 82 247 76L244 60Z" />
                <path d="M245 82C243 90 234 104 239 110C245 116 251 112 252 104Z" />
                <path d="M252 113C249 120 240 132 245 137C250 142 256 139 256 133Z" />
            </g>

            {/* axes and handles */}
            <path d="M218 66L250 205" stroke="#a51f5e" strokeWidth="1.500" strokeDasharray="9 4" />
            <path d="M228 124L218 145L213 195" stroke="#c32566" strokeWidth="1.200" strokeDasharray="8 6" />
            <path d="M218 66L208 113" stroke="#4b1a66" />
            <path d="M218 65L212 72L218 78M225 65L231 72L225 78" stroke="#ef4b50" strokeWidth="2" strokeDasharray="7 1" />
            <path d="M239 147L251 147.500" stroke="#d63a30" strokeWidth="1.600" /><circle cx="252" cy="147.500" r="1.700" fill="#d63a30" />
            <path d="M239 147L237 138" stroke="#4fd04a" strokeWidth="2" /><circle cx="237" cy="138" r="2" fill="#4fd04a" />
            <path d="M239 147L236 156" stroke="#3fe3e3" strokeWidth="2" /><circle cx="236" cy="156" r="2.200" fill="#3fe3e3" />
            <ellipse cx="254" cy="204" rx="13" ry="10" stroke="#ff9d0c" strokeWidth="1.500" />
            <circle cx="259" cy="232" r="10" stroke="#ff9d0c" strokeWidth="1.500" />
            <path d="M246 213L256 228M257 195V207M264 213L261 228" stroke="#ffa512" strokeWidth="1.400" />
            <path d="M207 27L217 37M217 27L207 37M249 204L259 214M259 204L249 214" stroke="#0bbf10" strokeWidth="3.400" />
            <g fill="#b31655"><circle cx="255" cy="228" r="2" /><circle cx="265" cy="228" r="2" /><circle cx="255" cy="238" r="2" /><circle cx="265" cy="238" r="2" /></g>
            <path d="M257 230L263 236M263 230L257 236" stroke="#b31655" strokeWidth="1.500" />
            <path d="M263 222L267 214L266 224L272 200L279 187" stroke="#51135f" />
            <circle cx="212" cy="205" r="7.500" fill="#ffd400" stroke="#8b7a10" strokeWidth="1.500" />
            <path d="M193 195L210 204" stroke="#51135f" />
        </svg>
        <span className="absolute top-[176px] left-[299px] border-2 border-[#8e9fc9] bg-[#eceaf1] px-1.5 font-['Liberation_Sans',sans-serif] text-[15px] leading-5 text-[#3c1a6b]">Coincident</span>
        <span className="absolute top-[239px] left-[143px] bg-[#fbdfae]/85 px-1.5 font-['Liberation_Sans',sans-serif] text-[15px] leading-[21px] text-[#3c1a6b]">30.000000</span>
    </div>
);

/* ---------- status bar ---------- */

const StatusBar = () => (
    <footer className="flex h-[47px] items-center border-t-2 border-[#bfc3c8] bg-white pl-[7px] text-sm text-[#4a4e50]">
        <button aria-label="Show tree" className="mt-1 flex h-[30px] w-7 items-center justify-center border-2 border-[#bfc1c3] bg-[#e3e4e6]">
            <svg width="22" height="22" viewBox="0 0 22 22" fill="none"><path d="M1 2H20V19H1Z" fill="#fff" stroke="#888" /><path d="M1 6H20" stroke="#888" /><path d="M2 6H8V19H2Z" fill="#6fc6e8" stroke="#2a7796" /><path d="M9 18C12 14 18 14 21 18C18 22 12 22 9 18Z" fill="#eee" stroke="#333" strokeWidth="1.500" /><circle cx="15" cy="18" r="2" fill="#333" /></svg>
        </button>
        <button aria-label="Browser" className="ml-2 pt-1">
            <svg width="22" height="22" viewBox="0 0 22 22" fill="none"><circle cx="11" cy="11" r="8.500" fill="#2e8fc6" /><path d="M7 5C10 3 13 4 12 7C10 9 7 9 6 12C4 11 4 7 7 5ZM13 10C16 9 18 11 16 14C14 17 12 16 12 13Z" fill="#a7dcf4" /><path d="M17 4C21 -1 23 3 17 10C11 17 3 22 1 20C-1 18 3 12 5 10" stroke="#666" strokeWidth="1.400" /></svg>
        </button>
        <button aria-label="Full screen" className="ml-[11px] pt-1">
            <svg width="20" height="20" viewBox="0 0 20 20"><path d="M1 1H19V19H1Z" fill="#e8f2f7" stroke="#2f7b9a" strokeWidth="1.500" /></svg>
        </button>
        <span className="ml-[15px] h-[30px] w-px bg-[#ccc]" />

        <div className="flex flex-1 items-center justify-end pr-[23px]">
            <span className="h-[38px] w-px bg-[#ccc]" />
            <span className="mr-2 ml-[5px] h-[38px] w-px bg-[#ccc]" />
            <button aria-label="Find" className="mr-[7px] flex items-center gap-2">
                <svg width="21" height="20" viewBox="0 0 21 20"><path d="M4 1H9V4L10 6H11L12 4V1H17V4L21 17V19H13V12H8V19H0V17Z" fill="#3c3c3c" /><path d="M3 10L1 17H4L5 9ZM15 9V17H17Z" fill="#9c9c9c" /></svg>
                <Caret />
            </button>
            <span className="mr-2 h-[38px] w-px bg-[#ccc]" />
            <button aria-label="Box select" className="mr-2.5 flex items-center gap-2">
                <svg width="20" height="16" viewBox="0 0 20 16"><path d="M1 1H19V15H1Z" fill="none" stroke="#999" strokeWidth="1.500" strokeDasharray="4 3" /></svg>
                <Caret color="#aaa" />
            </button>
            <button aria-label="Select visible" className="mr-2">
                <svg width="21" height="21" viewBox="0 0 21 21" fill="none" stroke="#999"><path d="M1 1H20V20H1Z" fill="#eee" strokeDasharray="3 2" strokeWidth="1.400" /><path d="M2 7C5 3 9 3 12 7C9 10 5 10 2 7ZM6 6H8V8H6ZM12 7L19 15H16L14 19Z" fill="#ddd" /></svg>
            </button>
            <button aria-label="Geometry" className="mr-1 flex h-[34px] w-[50px] items-center justify-center border border-[#d5d8da] bg-[#eff0f2]">
                <svg width="24" height="24" viewBox="0 0 24 24" fill="none" stroke="#999" strokeWidth="1.500"><path d="M1 6H17V23H1ZM1 6L6 1H23V18L17 23M17 6L23 1" /><path d="M6 11H12V18H6ZM6 11L8 9H14V16L12 18" strokeWidth="1" /></svg>
            </button>
            <span className="w-[108px]">2 selected</span>
            <div className="flex h-[29px] w-[206px] items-center border-2 border-[#bcc0c2] bg-[#f8f8f8]">
                <select aria-label="Selection filter" className="h-full flex-1 appearance-none pl-2"><option>All</option></select>
                <span className="flex h-full w-[18px] items-center justify-center border-l border-[#bcc0c2]"><Caret /></span>
            </div>
        </div>
    </footer>
);

export default function App() {
    return (
        <div className="relative flex min-h-screen flex-col bg-white font-['Noto_Sans','Open_Sans',sans-serif]">
            <TitleBar />
            <MenuBar />
            <Ribbon />
            <main className="flex flex-1">
                <ModelTree />
                <div className="relative flex flex-1 items-start overflow-hidden bg-[#e8e9ed]">
                    <ModelView />
                    <PlacementPanel />
                    <GraphicsToolbar />
                </div>
            </main>
            <StatusBar />
            {/* pointer */}
            <svg width="26" height="42" viewBox="0 0 26 42" className="pointer-events-none absolute top-[147px] left-[1292px] z-20">
                <path d="M2 2V32L9 26L15 39C17 41 21 39 20 36L15 24H24Z" fill="#fff" stroke="#000" strokeWidth="2.200" strokeLinejoin="round" />
            </svg>
        </div>
    );
}
